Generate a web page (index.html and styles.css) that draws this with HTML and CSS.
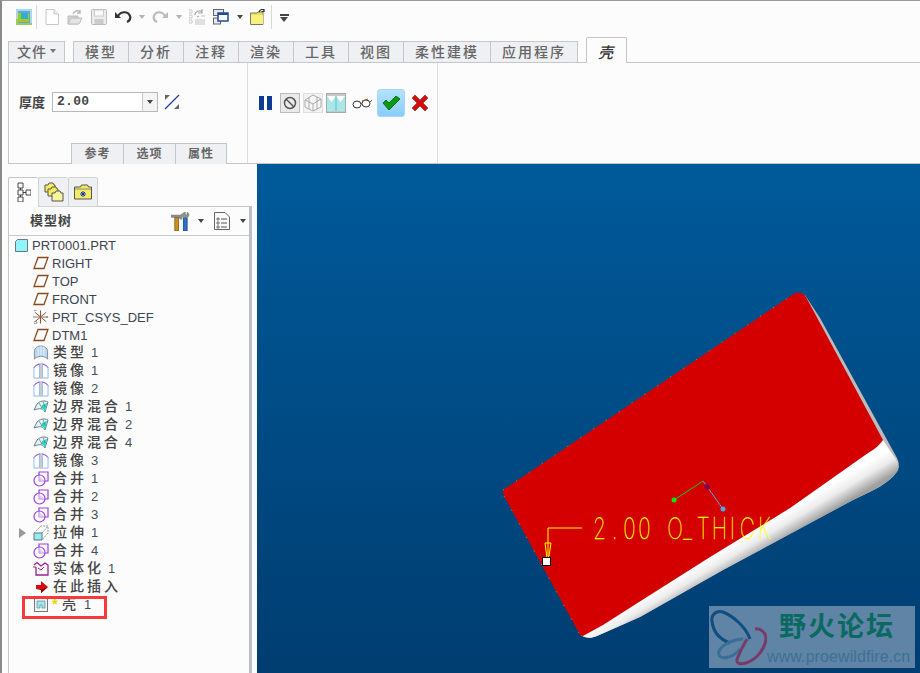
FILE: index.html
```html
<!DOCTYPE html>
<html lang="zh">
<head>
<meta charset="utf-8">
<title>壳</title>
<link rel="stylesheet" href="styles.css">
</head>
<body>
<svg class="defs" aria-hidden="true">
  <symbol id="i-plane" viewBox="0 0 16 16"><path d="M5 2.500H15L11 13.500H1Z" fill="none" stroke="#8c4a1c" stroke-width="1.300"/></symbol>
  <symbol id="i-csys" viewBox="0 0 17 16"><path d="M8 1V15M2 3L14 13M2 13L14 3" fill="none" stroke="#8c4a1c" stroke-width="1"/><path d="M0 8H16" stroke="#777" stroke-width="1"/><path d="M1 1H4M14 7l2 2M14 9l2-2M1 13h3v2H1" fill="none" stroke="#888" stroke-width=".8"/></symbol>
  <symbol id="i-type" viewBox="0 0 16 17"><path d="M1 15V6C2 2 6 1 8 1S14 2 15 6V15C12 11 4 11 1 15Z" fill="#bcd6f2" stroke="#7c8a98" stroke-width="1"/><path d="M5 2V12M8 1V11M11 2V12" stroke="#e8f2fc" stroke-width="1"/></symbol>
  <symbol id="i-mirror" viewBox="0 0 16 17"><path d="M.5 16V5C1.500 3 3.500 2 6.500 1V16Z" fill="#fff" stroke="#88b4f4" stroke-width="1"/><path d="M15.500 16V5C14.500 3 12.500 2 9.500 1V16Z" fill="#fff" stroke="#88b4f4" stroke-width="1"/><path d="M8 0V17" stroke="#999" stroke-width="1"/><path d="M.5 5C1.500 3 3.500 2 6.500 1M15.500 5C14.500 3 12.500 2 9.500 1" fill="none" stroke="#9a40e0" stroke-width="1"/></symbol>
  <symbol id="i-bound" viewBox="0 0 16 16"><path d="M4 5C7 2 11 1 15 3L12 13C10 9 7 9 1 11Z" fill="#e8f4f4" stroke="#6a8088" stroke-width="1"/><path d="M9 6L14 4L12 13C11 10 10 9 8 9Z" fill="#22d8c8"/><path d="M6 4L9 9M10 2.500L12 8" stroke="#6a8088" stroke-width=".8"/></symbol>
  <symbol id="i-merge" viewBox="0 0 16 16"><path d="M6 1H15V10H6Z" fill="none" stroke="#9a40e0" stroke-width="1.200"/><circle cx="6.500" cy="9.500" r="5.500" fill="#fff" fill-opacity=".5" stroke="#9a40e0" stroke-width="1.200"/><path d="M6 5V10H11" fill="#e0c8f4" stroke="#c8a8e8" stroke-width=".8"/></symbol>
  <symbol id="i-extrude" viewBox="0 0 16 16"><path d="M1 8H9V15H1Z" fill="#90eef0" stroke="#6a7078" stroke-width="1"/><path d="M1 8L8 1H15V8L9 15M9 8L15 1" fill="none" stroke="#6a8088" stroke-width=".8" stroke-dasharray="2 1"/></symbol>
  <symbol id="i-solid" viewBox="0 0 16 16"><path d="M1 4L4 1.500L8 5L12 2L15 4V14H3V6" fill="none" stroke="#9a2090" stroke-width="1.300"/><path d="M0 6H3M5 7L8 9L11 6" fill="none" stroke="#9a2090" stroke-width="1"/></symbol>
</svg>
<div class="app">
  <div class="qat">
    <svg class="ic w16" viewBox="0 0 16 16"><rect width="16" height="16" fill="#a8d8ea"/><rect x="2" y="2" width="12" height="12" fill="#5aa8dc"/><path d="M2 4H13V13H2Z" fill="#a8c828"/><rect x="5" y="4" width="7" height="6" fill="#30b0c8"/><path d="M0 16V10H2V14H16V16Z" fill="#9ccc50"/></svg>
    <span class="sep g4"></span>
    <svg class="ic w14 g8" viewBox="0 0 14 16"><path d="M1 .500H9L13.500 5V15.500H1Z" fill="#fff" stroke="#c8c8c8"/><path d="M9 .500V5H13.500" fill="#eee" stroke="#c8c8c8"/></svg>
    <svg class="ic w16 g8" viewBox="0 0 16 16"><path d="M1 7H11V15H1Z" fill="#d4d4d4" stroke="#bcbcbc"/><path d="M1 15L4 9H15L12 15Z" fill="#e4e4e4" stroke="#bcbcbc"/><path d="M6 5C8 1 11 1 13 3M13 1V4H10" fill="none" stroke="#b8b8b8" stroke-width="1.500"/></svg>
    <svg class="ic w16 g8" viewBox="0 0 16 16"><rect x=".5" y=".5" width="15" height="15" rx="1" fill="#ececec" stroke="#bbb"/><rect x="3.500" y="1" width="9" height="6" fill="#fafafa" stroke="#ccc"/><rect x="3.500" y="10" width="9" height="5" fill="#ccc"/></svg>
    <svg class="ic w17 g8" viewBox="0 0 17 16"><path d="M3 7C6 2 13 2 15 7C16 10 14 12 12 13" fill="none" stroke="#333" stroke-width="2.200"/><path d="M0 3V9H6Z" fill="#333"/></svg>
    <span class="dd light g7"></span>
    <svg class="ic w16 g7" viewBox="0 0 16 16"><path d="M13 7C10 2 4 2 2 7C1 10 3 12 5 13" fill="none" stroke="#bbb" stroke-width="2.200"/><path d="M16 3V9H10Z" fill="#bbb"/></svg>
    <span class="dd light g8"></span>
    <svg class="ic w16 g7" viewBox="0 0 16 16"><path d="M0 1h3v3H0ZM0 6h3v3H0ZM0 11h3v3H0Z" fill="#fff" stroke="#bbb" stroke-width=".8"/><path d="M6 11H16M6 13H16M6 15H16M12 7H16" stroke="#c4c4c4"/><path d="M6 6C6 2 11 1 13 3M13 0V4H9M8 8l2-1" fill="none" stroke="#aaa" stroke-width="1.200"/></svg>
    <svg class="ic w17 g8" viewBox="0 0 17 16"><rect x=".5" y=".5" width="10" height="6" fill="#e8e8e8" stroke="#666"/><rect x=".5" y="9" width="7" height="6" fill="#e8e8e8" stroke="#666"/><rect x="5" y="4" width="10" height="8" fill="#fff" stroke="#1a4e9c" stroke-width="1.500"/><path d="M5 5H15" stroke="#1a4e9c" stroke-width="2"/></svg>
    <span class="dd g7"></span>
    <svg class="ic w17 g7" viewBox="0 0 17 16"><path d="M.5 4H7L8 3H13V15.500H.5Z" fill="#ede35a" stroke="#777"/><path d="M1 6H13V15H1Z" fill="#f8f27c"/><path d="M9 3C10 0 13 0 14 1M14 0V2.500H11.500" fill="none" stroke="#333" stroke-width="1.200"/></svg>
    <span class="sep g4"></span>
    <span class="dd wide g8"></span>
  </div>

  <div class="tabs">
    <div class="tab file">文件<span class="dd small"></span></div>
    <div class="tabgroup">
      <div class="tab">模型</div>
      <div class="tab">分析</div>
      <div class="tab">注释</div>
      <div class="tab">渲染</div>
      <div class="tab">工具</div>
      <div class="tab">视图</div>
      <div class="tab long">柔性建模</div>
      <div class="tab long">应用程序</div>
    </div>
    <div class="tab active"><i>壳</i></div>
  </div>

  <div class="ribbon">
    <div class="group first">
      <div class="thick">
        <span class="label">厚度</span>
        <div class="combo"><span class="value">2.00</span><span class="arrow"><span class="dd"></span></span></div>
        <svg class="ic flip" viewBox="0 0 16 16"><path d="M1 15L15 1" stroke="#1a3ca0" stroke-width="1.300"/><path d="M1 1H6L1 6ZM15 15H10L15 10Z" fill="#666"/></svg>
      </div>
      <div class="subtabs"><div class="subtab">参考</div><div class="subtab">选项</div><div class="subtab">属性</div></div>
    </div>
    <div class="group second">
      <svg class="ic pause" viewBox="0 0 13 14"><path d="M0 0H5V14H0ZM8 0H13V14H8Z" fill="#0c3a94"/></svg>
      <span class="tool g8"><svg viewBox="0 0 14 14" class="tool-ic"><circle cx="7" cy="7" r="5.500" fill="none" stroke="#555" stroke-width="1.500"/><path d="M3 3L11 11" stroke="#555" stroke-width="1.500"/></svg></span>
      <span class="tool plain g3"><svg viewBox="0 0 18 18" class="tool-lg"><path d="M1 6L9 1L17 5V13L9 17L1 13ZM1 6L9 10L17 5M9 10V17M5 3.500V15M13 3V15" fill="#f6f6f6" stroke="#999" stroke-width=".8"/></svg></span>
      <span class="tool on g3"><svg viewBox="0 0 18 18" class="tool-lg"><path d="M0 2H18V17H0Z" fill="#a8e8ea"/><path d="M0 2H9L4.500 8ZM9 2H18L13.500 8Z" fill="#fff"/><path d="M9 2V17" stroke="#70b8c0"/></svg></span>
      <svg class="ic glasses g6" viewBox="0 0 20 12"><ellipse cx="5" cy="7.500" rx="4" ry="3.500" fill="#fff" stroke="#333"/><ellipse cx="14" cy="6.500" rx="4" ry="3.500" fill="#fff" stroke="#333"/><path d="M9 6.500L10 6M18 5L20 3" stroke="#8c5a20"/><path d="M10 4L16 2" stroke="#8c5a20"/></svg>
      <span class="ok g5"><svg viewBox="0 0 18 14" class="ok-ic"><path d="M1 7L4 4L7 7L14 0L18 3L7 14Z" fill="#0a9a10" stroke="#065a0a" stroke-width=".8"/></svg></span>
      <svg class="ic cancel g7" viewBox="0 0 16 16"><path d="M0 3L3 0L8 5L13 0L16 3L11 8L16 13L13 16L8 11L3 16L0 13L5 8Z" fill="#d01010" stroke="#8c1010" stroke-width=".5"/></svg>
    </div>
  </div>

  <div class="main">
    <aside class="side">
      <div class="sidetabs">
        <div class="stab active">
          <svg viewBox="0 0 14 20" class="stab-ic"><path d="M1 1h5v5H1ZM1 8h5v5H1ZM1 15h5v5H1ZM9 8h5v5H9ZM3.500 6v2M3.500 13v2M6 10.500h3" fill="#fff" stroke="#444" stroke-width="1"/></svg>
        </div>
        <div class="stab">
          <svg viewBox="0 0 20 20" class="stab-ic2"><path d="M1 3h3l1-2h4l1 2h1v7H1Z" fill="#f4ec60" stroke="#555"/><path d="M4 7h3l1-2h4l1 2h1v7H4Z" fill="#f4ec60" stroke="#555"/><path d="M8 11h3l1-2h4l1 2h2v8H8Z" fill="#f8f4a0" stroke="#555"/></svg>
        </div>
        <div class="stab">
          <svg viewBox="0 0 18 16" class="stab-ic3"><path d="M.5 3h6l1-2h6l1 2h3v12H.5Z" fill="#f4ec60" stroke="#555"/><path d="M1 5h16" stroke="#888"/><path d="M9 7v6M6 10h6M7 8l4 4M11 8l-4 4" stroke="#1030c0"/></svg>
        </div>
      </div>
      <div class="panel">
        <div class="panelhead">
          <span class="paneltitle">模型树</span>
          <svg class="hammer" viewBox="0 0 20 20"><path d="M0 3H10L12 1V8H10L8 6H0Z" fill="#8a8a8a"/><rect x="4" y="6" width="4" height="14" fill="#c8901c" stroke="#7a4a10" stroke-width=".7"/><rect x="13" y="6" width="4" height="14" fill="#2a72c8" stroke="#123a80" stroke-width=".7"/><path d="M13 6C11 3 13 0 15 0V3H17V0C19 1 20 4 17 6Z" fill="#8a9a80" stroke="#5a6a58" stroke-width=".5"/></svg>
          <span class="dd after-hammer"></span>
          <svg class="list" viewBox="0 0 16 18"><path d="M.5 .5H11L15.500 5V17.500H.5Z" fill="#fafafa" stroke="#666"/><path d="M3 6h2v2H3ZM3 10h2v2H3ZM3 14h2v2H3Z" fill="#fff" stroke="#444" stroke-width=".7"/><path d="M7 7H13M7 11H13M7 15H13" stroke="#555"/></svg>
          <span class="dd after-list"></span>
        </div>
        <ul class="tree">
          <li class="row root"><svg class="node small" viewBox="0 0 13 13"><path d="M.5 2.500L2.500 .5H12.500V12.500H.5Z" fill="#90f4f8" stroke="#6a7a88"/></svg><span class="lat">PRT0001.PRT</span></li>
          <li class="row"><svg class="node"><use href="#i-plane"/></svg><span class="lat">RIGHT</span></li>
          <li class="row"><svg class="node"><use href="#i-plane"/></svg><span class="lat">TOP</span></li>
          <li class="row"><svg class="node"><use href="#i-plane"/></svg><span class="lat">FRONT</span></li>
          <li class="row"><svg class="node"><use href="#i-csys"/></svg><span class="lat">PRT_CSYS_DEF</span></li>
          <li class="row"><svg class="node"><use href="#i-plane"/></svg><span class="lat">DTM1</span></li>
          <li class="row"><svg class="node"><use href="#i-type"/></svg><span class="cjk">类型</span><span class="num">1</span></li>
          <li class="row"><svg class="node"><use href="#i-mirror"/></svg><span class="cjk">镜像</span><span class="num">1</span></li>
          <li class="row"><svg class="node"><use href="#i-mirror"/></svg><span class="cjk">镜像</span><span class="num">2</span></li>
          <li class="row"><svg class="node"><use href="#i-bound"/></svg><span class="cjk">边界混合</span><span class="num">1</span></li>
          <li class="row"><svg class="node"><use href="#i-bound"/></svg><span class="cjk">边界混合</span><span class="num">2</span></li>
          <li class="row"><svg class="node"><use href="#i-bound"/></svg><span class="cjk">边界混合</span><span class="num">4</span></li>
          <li class="row"><svg class="node"><use href="#i-mirror"/></svg><span class="cjk">镜像</span><span class="num">3</span></li>
          <li class="row"><svg class="node"><use href="#i-merge"/></svg><span class="cjk">合并</span><span class="num">1</span></li>
          <li class="row"><svg class="node"><use href="#i-merge"/></svg><span class="cjk">合并</span><span class="num">2</span></li>
          <li class="row"><svg class="node"><use href="#i-merge"/></svg><span class="cjk">合并</span><span class="num">3</span></li>
          <li class="row"><span class="twist"></span><svg class="node"><use href="#i-extrude"/></svg><span class="cjk">拉伸</span><span class="num">1</span></li>
          <li class="row"><svg class="node"><use href="#i-merge"/></svg><span class="cjk">合并</span><span class="num">4</span></li>
          <li class="row"><svg class="node"><use href="#i-solid"/></svg><span class="cjk">实体化</span><span class="num">1</span></li>
          <li class="row"><svg class="node" viewBox="0 0 16 16"><path d="M3 6H8V2L15 8L8 14V10H3Z" fill="#d80c0c"/><path d="M3 10H8V14L15 8L8 11Z" fill="#701010"/></svg><span class="cjk">在此插入</span></li>
          <li class="row shell"><svg class="node" viewBox="0 0 16 16"><rect x="1.500" y="1.500" width="13" height="13" fill="#f4f4f4" stroke="#777"/><path d="M4 4H12V11H9V8H7V11H4Z" fill="#a0e8f0" stroke="#5a8a98" stroke-width=".7"/></svg><span class="star">*</span><span class="cjk tight">壳</span><span class="num wide-num">1</span><span class="mark"></span></li>
        </ul>
      </div>
    </aside>
    <section class="canvas">
      <svg class="scene" viewBox="257 164 663 509" preserveAspectRatio="none">
        <defs>
          <linearGradient id="bg" x1="0" y1="0" x2="0" y2="1"><stop offset="0" stop-color="#005a9a"/><stop offset="1" stop-color="#003d70"/></linearGradient>
          <linearGradient id="lip" gradientUnits="userSpaceOnUse" x1="710" y1="557" x2="722" y2="577"><stop offset="0" stop-color="#ffffff"/><stop offset=".45" stop-color="#ececec"/><stop offset="1" stop-color="#a0a0a0"/></linearGradient>
        </defs>
        <rect x="257" y="164" width="663" height="509" fill="url(#bg)"/>
        <path d="M805 295L820 318L897 458C900 464 899 470 896 473C890 482 875 490 853 500L723 570L640 617L597 636C590 639 585 638 581 635Z" fill="#bcbcbc"/>
        <path d="M883 440L893 455C900 463 899 470 896 473C890 482 875 490 853 500L723 570L640 617L597 636C590 639 585 638 581 635L650 595L710 557L790 508L868 453Z" fill="url(#lip)"/>
        <path d="M503 490L795 293C800 292 804 293 806 297L883 440C878 447 873 450 868 453L790 508L710 557L650 595L603 625L583 636C581 636 580 635 579 633L504 496C503 494 503 492 503 490Z" fill="#d40000"/>
        <path d="M503 490L795 293M504 496L579 633" fill="none" stroke="#ff9c10" stroke-width=".6" stroke-dasharray="1.500 14"/>
        <path d="M582 528H548V556" fill="none" stroke="#ffff00" stroke-width="1"/>
        <path d="M545 543H551L549 556L547 558Z" fill="none" stroke="#ffff00" stroke-width="1"/>
        <rect x="542.500" y="557.500" width="8" height="8" fill="#fff" stroke="#000"/>
        <text class="dim" transform="translate(593 539) scale(.72 1)" x="0 26 42 63 97 103 125 144 165 190 204 229" y="0">2.00 O_THICK</text>
        <path d="M674 500L703 481" stroke="#10d010" stroke-width="1"/>
        <path d="M703 481L723 509" stroke="#50a8e8" stroke-width="1"/>
        <circle cx="674" cy="500" r="2.500" fill="#00ee00"/>
        <circle cx="723" cy="509" r="2.500" fill="#50a8e8"/>
        <circle cx="707" cy="487" r="3" fill="#900040"/>
      </svg>
      <div class="watermark">
        <svg class="wm-logo" viewBox="0 0 58 60"><path d="M41 32C37 20 24 9 14 5C7 3 2 8 3 14C4 24 10 32 21 36" fill="none" stroke="#0e4e80" stroke-width="3"/><path d="M34 32C24 32 13 38 10 44C8 50 14 52 20 50C25 48 29 45 31 42" fill="none" stroke="#3a6e96" stroke-width="3"/><path d="M46 22C52 21 57 26 57 32C56 42 47 53 37 56C30 58 26 56 29 50C31 45 35 37 38 32" fill="none" stroke="#7a3a68" stroke-width="3"/></svg>
        <div class="wm-text"><div class="wm-title">野火论坛</div><div class="wm-url">www.proewildfire.cn</div></div>
      </div>
    </section>
  </div>
</div>
</body>
</html>
```
FILE: styles.css
```css
* { box-sizing: border-box; }
html, body { margin: 0; padding: 0; }
body { background: #fcfcfc; font-family: "Liberation Sans", "Noto Sans CJK SC", sans-serif; overflow: hidden; }
.defs { width: 0; height: 0; position: absolute; }
.app { width: 920px; height: 673px; display: flex; flex-direction: column; border-top: 1px solid #999; border-left: 2px solid #8a8a8a; background: #fcfcfc; overflow: hidden; }

.ic { display: block; flex: none; }
.w14 { width: 14px; height: 16px; }
.w16 { width: 16px; height: 16px; }
.w17 { width: 17px; height: 16px; }
.g3 { margin-left: 3px; }
.g4 { margin-left: 4px; }
.g5 { margin-left: 5px; }
.g6 { margin-left: 6px; }
.g7 { margin-left: 7px; }
.g8 { margin-left: 8px; }

.qat { height: 40px; flex: none; display: flex; align-items: center; padding: 0 0 8px 14px; }
.sep { width: 1px; height: 24px; background: #d8d8d8; flex: none; }
.dd { display: block; flex: none; width: 0; height: 0; border-top: 4px solid #444; border-left: 3.5px solid transparent; border-right: 3.5px solid transparent; }
.dd.light { border-top-color: #b0b0b0; }
.dd.wide { width: 9px; height: 7px; border: 0; background: linear-gradient(#444 0 2px, transparent 2px 3px); position: relative; }
.dd.wide::after { content: ""; position: absolute; left: 0; top: 3px; border-top: 5px solid #444; border-left: 4.500px solid transparent; border-right: 4.500px solid transparent; }
.dd.small { border-top-color: #777; margin-left: 3px; }

.tabs { height: 21px; flex: none; display: flex; align-items: flex-end; margin-left: 6px; font-size: 14px; color: #666; position: relative; z-index: 1; }
.tab { height: 21px; width: 55px; display: flex; align-items: center; justify-content: center; padding-bottom: 3px; background: #eff0f3; border-top: 1px solid #c4c6c9; border-left: 1px solid #c4c6c9; letter-spacing: 2px; font-weight: 500; }
.tab.long { width: 87px; }
.tab.file { width: 57px; border-right: 1px solid #c4c6c9; letter-spacing: 1px; }
.tabgroup { display: flex; margin-left: 8px; border-right: 1px solid #c4c6c9; }
.tab.active { width: 41px; height: 26px; margin: 0 0 -1px 8px; background: #fcfcfc; border: 1px solid #c4c6c9; border-bottom: 0; border-radius: 2px 2px 0 0; color: #333; font-size: 15px; letter-spacing: 0; padding: 1px 2px 0 0; }

.ribbon { height: 102px; flex: none; display: flex; margin-left: 6px; border-top: 1px solid #c4c6c9; border-left: 1px solid #c4c6c9; border-bottom: 1px solid #c4c6c9; }
.group { border-right: 1px solid #dcdcdc; flex: none; }
.group.first { width: 239px; display: flex; flex-direction: column; padding-top: 29px; }
.thick { display: flex; align-items: center; height: 20px; padding-left: 10px; }
.label { font-size: 13px; font-weight: 700; color: #444; width: 33px; padding-bottom: 2px; }
.combo { width: 106px; height: 20px; display: flex; border: 1px solid #b8b8b8; background: #fff; }
.value { flex: 1; font: 700 13px "Liberation Mono", monospace; color: #444; line-height: 18px; padding-left: 4px; letter-spacing: .3px; }
.arrow { width: 15px; display: flex; align-items: center; justify-content: center; border-left: 1px solid #c8c8c8; background: #f4f4f4; }
.flip { width: 16px; height: 16px; margin-left: 6px; }
.subtabs { display: flex; margin: auto 0 -1px 62px; }
.subtab { width: 52px; height: 21px; display: flex; align-items: center; justify-content: center; padding-bottom: 3px; background: #eff0f3; border: 1px solid #c4c6c9; border-bottom: 0; border-right: 0; font-size: 12px; font-weight: 700; color: #666; letter-spacing: 1px; }
.subtab:last-child { border-right: 1px solid #c4c6c9; }
.group.second { width: 190px; height: 100px; display: flex; align-items: center; padding: 0 0 21px 11px; }
.pause { width: 13px; height: 14px; }
.tool { width: 20px; height: 20px; flex: none; display: flex; align-items: center; justify-content: center; background: #eaeaea; border: 1px solid #bbb; }
.tool.plain { background: #f2f2f2; border-color: #e0e0e0; }
.tool.on { background: #c8c8c8; border-color: #a8a8a8; }
.tool-ic { width: 14px; height: 14px; }
.tool-lg { width: 18px; height: 18px; }
.glasses { width: 20px; height: 12px; }
.ok { width: 28px; height: 28px; flex: none; display: flex; align-items: center; justify-content: center; background: linear-gradient(#b4e2fc, #88ccf8); border: 1px solid #a4d8f8; border-radius: 3px; }
.ok-ic { width: 18px; height: 14px; }
.cancel { width: 16px; height: 16px; }

.main { flex: 1; min-height: 0; display: flex; }
.side { width: 244px; flex: none; margin-left: 6px; padding-top: 13px; display: flex; flex-direction: column; }
.sidetabs { height: 30px; flex: none; display: flex; margin-bottom: -1px; position: relative; z-index: 1; }
.stab { width: 30px; height: 30px; display: flex; align-items: center; justify-content: center; background: #eff0f3; border: 1px solid #d0d2d4; border-right: 0; border-radius: 2px 2px 0 0; }
.stab:last-child { border-right: 1px solid #d0d2d4; }
.stab.active { background: #fcfcfc; border-color: #c4c6c9 #c4c6c9 #fcfcfc; }
.stab-ic { width: 14px; height: 20px; }
.stab-ic2 { width: 20px; height: 20px; }
.stab-ic3 { width: 18px; height: 16px; }
.panel { flex: 1; min-height: 0; border-top: 1px solid #c4c6c9; border-left: 1px solid #c4c6c9; border-right: 3px solid #bcc0c4; }
.panelhead { height: 29px; display: flex; align-items: center; border-bottom: 1px solid #c8cacc; }
.paneltitle { font-size: 13px; font-weight: 700; color: #444; letter-spacing: 1px; margin-left: 21px; width: 141px; padding-bottom: 4px; }
.hammer { width: 19px; height: 19px; }
.after-hammer { margin-left: 8px; }
.list { width: 16px; height: 18px; margin-left: 10px; }
.after-list { margin-left: 10px; }

.tree { list-style: none; margin: 0; padding: 0; }
.row { height: 18px; display: flex; align-items: center; padding-left: 24px; position: relative; color: #44484e; font-size: 13px; white-space: nowrap; }
.row.root { padding-left: 6px; }
.node { width: 16px; height: 16px; flex: none; margin-right: 3px; }
.node.small { width: 13px; height: 13px; margin-right: 4px; }
.lat { color: #3c4450; }
.cjk { font-size: 14px; font-weight: 500; letter-spacing: 3px; color: #444; margin-left: 1px; padding-bottom: 4px; }
.num { margin-left: 4px; font-size: 13px; color: #444e5a; padding-bottom: 2px; }
.twist { position: absolute; left: 10px; top: 4px; border-left: 7px solid #999; border-top: 5px solid transparent; border-bottom: 5px solid transparent; }
.star { color: #e8d800; font-weight: 700; font-size: 15px; margin: -4px 0 0 0; width: 9px; }
.tight { letter-spacing: 0; margin-left: 1px; }
.num.wide-num { margin-left: 8px; }
.mark { position: absolute; left: 13px; top: 0; width: 85px; height: 23px; border: 3px solid #f43a3a; }

.canvas { flex: 1; margin-left: 5px; position: relative; min-width: 0; }
.scene { display: block; width: 100%; height: 100%; }
.dim { font: 100 29px Inter, "Liberation Sans", sans-serif; fill: #ffff00; stroke: #ffff00; stroke-width: .35; }
.watermark { position: absolute; right: 5px; bottom: 5px; width: 206px; height: 62px; background: #5f84a6; display: flex; }
.wm-logo { width: 58px; height: 60px; flex: none; margin-top: 1px; }
.wm-text { display: flex; flex-direction: column; flex: none; }
.wm-title { font: 700 27px/34px "Noto Sans CJK SC", sans-serif; color: #0a6a62; padding-left: 12px; letter-spacing: 2px; margin-top: 2px; }
.wm-url { font: 400 16px/22px "Liberation Sans", sans-serif; letter-spacing: .1px; color: #3d7095; white-space: nowrap; margin-top: 4px; }
```
